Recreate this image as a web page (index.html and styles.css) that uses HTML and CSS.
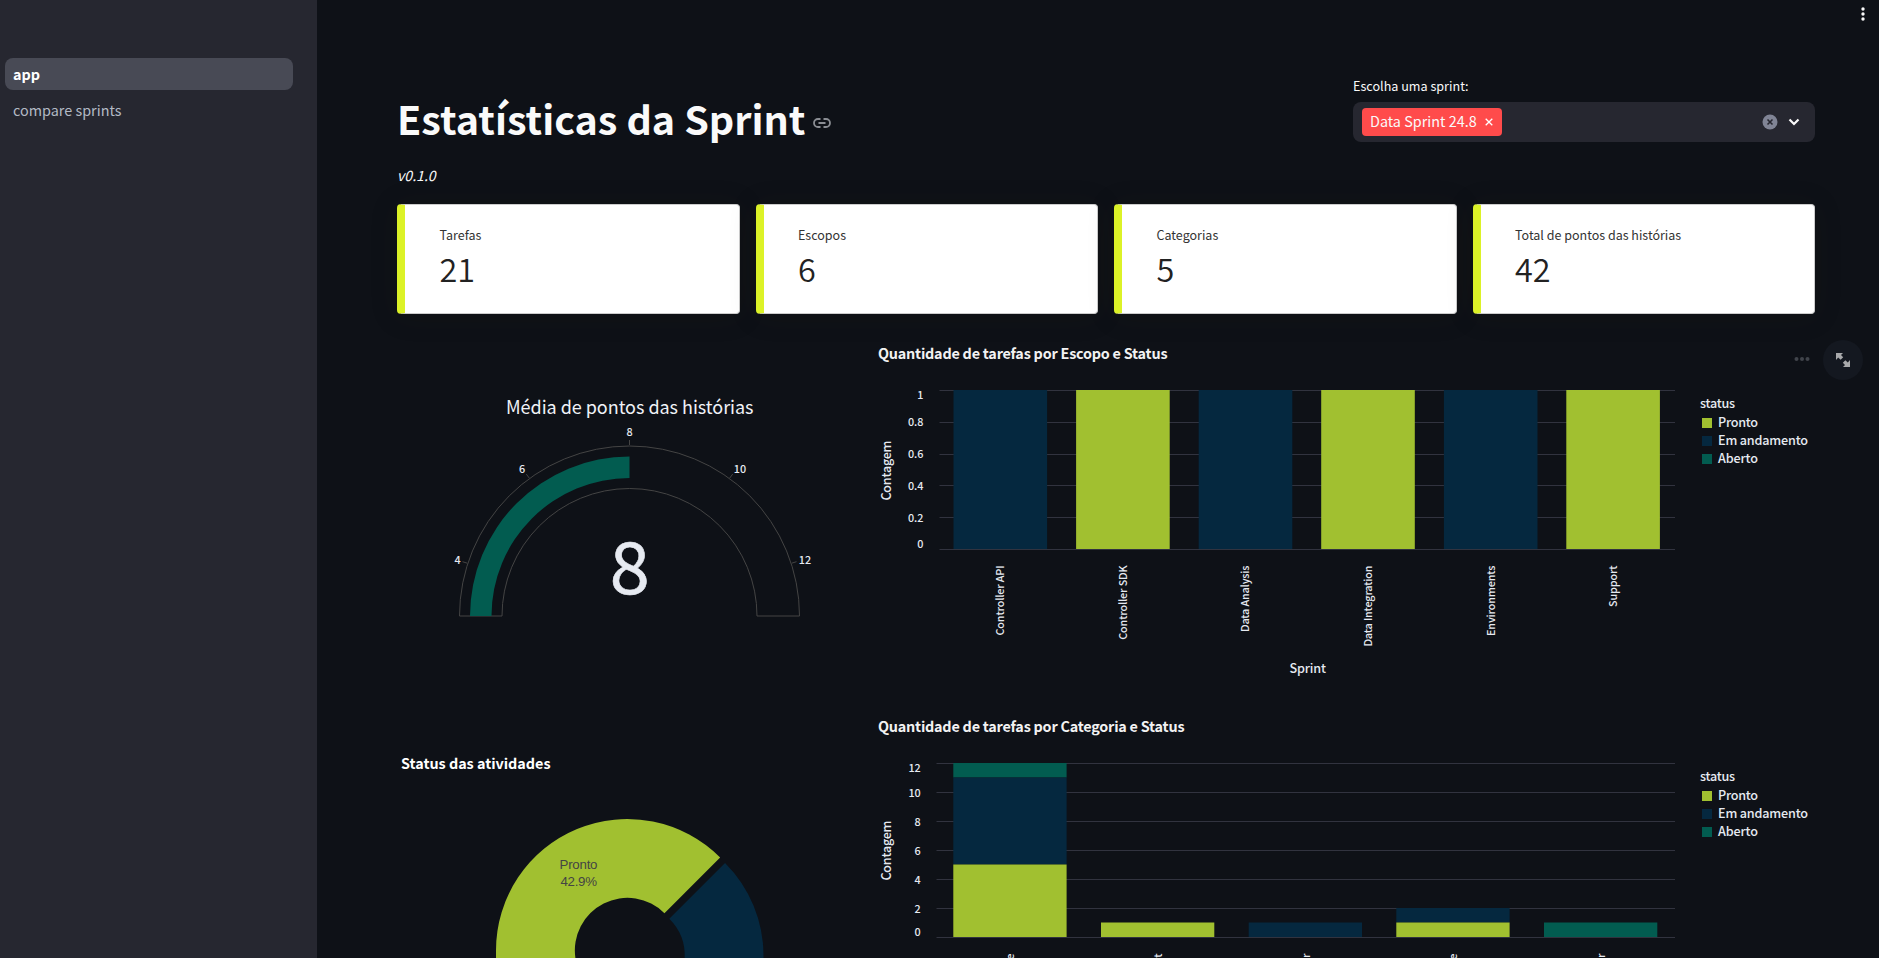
FILE: index.html
```html
<!DOCTYPE html>
<html lang="pt-BR">
<head>
<meta charset="utf-8">
<title>Estatísticas da Sprint</title>
<link rel="stylesheet" href="styles.css">
</head>
<body>
<div class="app">
  <aside class="sidebar">
    <nav class="nav">
      <a class="nav-item active">app</a>
      <a class="nav-item">compare sprints</a>
    </nav>
  </aside>
  <main class="main">
    <svg class="kebab" width="4" height="14" viewBox="0 0 4 14"><circle cx="2" cy="2" r="1.7"/><circle cx="2" cy="7" r="1.7"/><circle cx="2" cy="12" r="1.7"/></svg>
    <header class="header">
      <h1 class="title"><span>Estatísticas da Sprint</span>
        <svg class="link" width="18" height="10" viewBox="0 0 18 10"><path d="M7.5 1H5a4 4 0 0 0 0 8h2.500M10.500 1H13a4 4 0 0 1 0 8h-2.500M5.500 5h7"/></svg>
      </h1>
      <div class="field">
        <label class="field-label">Escolha uma sprint:</label>
        <div class="select">
          <span class="tag"><span class="tag-text">Data Sprint 24.8</span><svg width="8" height="8" viewBox="0 0 8 8"><path d="M.7.7l6.600 6.600M7.300.7L.7 7.300"/></svg></span>
          <svg class="clear" width="16" height="16" viewBox="0 0 16 16"><circle cx="8" cy="8" r="7.500"/><path d="M5.500 5.500l5 5M10.500 5.500l-5 5"/></svg>
          <svg class="chevron" width="12" height="8" viewBox="0 0 12 8"><path d="M1.500 1.500L6 6l4.500-4.500"/></svg>
        </div>
      </div>
    </header>
    <p class="version">v0.1.0</p>
    <section class="cards">
      <div class="card"><span class="card-label">Tarefas</span><span class="card-value">21</span></div>
      <div class="card"><span class="card-label">Escopos</span><span class="card-value">6</span></div>
      <div class="card"><span class="card-label">Categorias</span><span class="card-value">5</span></div>
      <div class="card"><span class="card-label">Total de pontos das histórias</span><span class="card-value">42</span></div>
    </section>
    <section class="charts">
      <svg class="chart" width="465" height="373" viewBox="397 330 465 373">
        <text class="gauge-title" x="506" y="414" textLength="247.500">Média de pontos das histórias</text>
        <path class="gauge-line" d="M459.500 616A170 170 0 0 1 799.500 616H757A127.500 127.500 0 0 0 502 616Z"/>
        <path class="teal" d="M470 616A159.500 159.500 0 0 1 629.500 456.500V478A138 138 0 0 0 491.500 616Z"/>
        <g class="gauge-line"><path d="M629.500 445v-5M467.300 563.200l-4.800-1.500M529.300 478.100l-3-4M729.700 478.100l3-4M791.700 563.200l4.800-1.500"/></g>
        <g class="gauge-tick"><text x="457.500" y="564">4</text><text x="522" y="473">6</text><text x="629.500" y="436">8</text><text x="740" y="473">10</text><text x="805" y="564">12</text></g>
        <text class="gauge-value" x="629.700" y="594">8</text>
      </svg>
      <div class="chart-box">
        <svg class="chart" width="938" height="373" viewBox="877 330 938 373">
          <text class="chart-title" x="878" y="359" textLength="289.500">Quantidade de tarefas por Escopo e Status</text>
          <path class="grid" d="M939.500 390.500H1675M939.500 422.500H1675M939.500 454.500H1675M939.500 485.500H1675M939.500 517.500H1675M939.500 549.500H1675"/>
          <g class="navy"><rect x="953.500" y="390" width="93.600" height="159"/><rect x="1198.700" y="390" width="93.600" height="159"/><rect x="1443.900" y="390" width="93.600" height="159"/></g>
          <g class="green"><rect x="1076.100" y="390" width="93.600" height="159"/><rect x="1321.200" y="390" width="93.600" height="159"/><rect x="1566.300" y="390" width="93.600" height="159"/></g>
          <g class="tick end"><text x="923.500" y="399">1</text><text x="923.500" y="426">0.8</text><text x="923.500" y="458">0.6</text><text x="923.500" y="490">0.4</text><text x="923.500" y="522">0.2</text><text x="923.500" y="548">0</text></g>
          <text class="axis-title" transform="translate(890.500 500.500) rotate(-90)" textLength="60">Contagem</text>
          <g class="tick">
            <text transform="translate(1004 635.500) rotate(-90)" textLength="70">Controller API</text>
            <text transform="translate(1127 639.800) rotate(-90)" textLength="74.500">Controller SDK</text>
            <text transform="translate(1249 632) rotate(-90)" textLength="66.500">Data Analysis</text>
            <text transform="translate(1372 646.500) rotate(-90)" textLength="81">Data Integration</text>
            <text transform="translate(1495 636) rotate(-90)" textLength="70.500">Environments</text>
            <text transform="translate(1617 607) rotate(-90)" textLength="41.500">Support</text>
          </g>
          <text class="axis-title" x="1289.500" y="673" textLength="36.500">Sprint</text>
          <g class="legend"><text x="1700" y="408" textLength="35">status</text><text x="1718" y="427" textLength="40">Pronto</text><text x="1718" y="445" textLength="90">Em andamento</text><text x="1718" y="463" textLength="40">Aberto</text></g>
          <rect class="green" x="1702" y="418" width="10" height="10"/><rect class="navy" x="1702" y="436" width="10" height="10"/><rect class="teal" x="1702" y="454" width="10" height="10"/>
          <g class="dots"><circle cx="1796.500" cy="359" r="2"/><circle cx="1802" cy="359" r="2"/><circle cx="1807.500" cy="359" r="2"/></g>
        </svg>
        <span class="expand"><svg width="14" height="14" viewBox="0 0 14 14"><path d="M0 0h7L5 2l2.200 2.200-2.600 2.600L2.200 4.600 0 7zM14 14H7l2-2-2.200-2.200 2.600-2.600 2.400 2.200L14 7z"/></svg></span>
      </div>
      <svg class="chart" width="465" height="255" viewBox="397 703 465 255">
        <text class="pie-title" x="401" y="769" textLength="149.500">Status das atividades</text>
        <path class="green" d="M720.140 857.460A131.300 131.300 0 0 0 496 950.300V958H575.400A52.500 52.500 0 0 1 664.420 913.180Z"/>
        <path class="navy" d="M725.040 862.960A131.300 131.300 0 0 1 763.500 955.800V958H684.700A52.500 52.500 0 0 0 669.320 918.680Z"/>
        <g class="pie-label"><text x="559.500" y="869" textLength="38">Pronto</text><text x="560.500" y="886" textLength="36.500">42.9%</text></g>
      </svg>
      <svg class="chart" width="938" height="255" viewBox="877 703 938 255">
        <text class="chart-title" x="878" y="732" textLength="306.500">Quantidade de tarefas por Categoria e Status</text>
        <path class="grid" d="M936.500 763.500H1675M936.500 792.500H1675M936.500 821.500H1675M936.500 850.500H1675M936.500 879.500H1675M936.500 908.500H1675M936.500 937.500H1675"/>
        <g class="teal"><rect x="953.300" y="763" width="113.300" height="14.500"/><rect x="1544" y="922.500" width="113.300" height="14.500"/></g>
        <g class="navy"><rect x="953.300" y="777.500" width="113.300" height="87"/><rect x="1248.700" y="922.500" width="113.300" height="14.500"/><rect x="1396.300" y="908" width="113.300" height="14.500"/></g>
        <g class="green"><rect x="953.300" y="864.500" width="113.300" height="72.500"/><rect x="1101" y="922.500" width="113.300" height="14.500"/><rect x="1396.300" y="922.500" width="113.300" height="14.500"/></g>
        <g class="tick end"><text x="920.700" y="772">12</text><text x="920.700" y="797">10</text><text x="920.700" y="826">8</text><text x="920.700" y="855">6</text><text x="920.700" y="884">4</text><text x="920.700" y="913">2</text><text x="920.700" y="936">0</text></g>
        <text class="axis-title" transform="translate(890.500 880.500) rotate(-90)" textLength="60">Contagem</text>
        <g class="tick end">
          <text transform="translate(1014 953.500) rotate(-90)">e</text>
          <text transform="translate(1162 953.500) rotate(-90)">t</text>
          <text transform="translate(1309.500 953.500) rotate(-90)">r</text>
          <text transform="translate(1457 953.500) rotate(-90)">e</text>
          <text transform="translate(1605 953.500) rotate(-90)">r</text>
        </g>
        <g class="legend"><text x="1700" y="781" textLength="35">status</text><text x="1718" y="800" textLength="40">Pronto</text><text x="1718" y="818" textLength="90">Em andamento</text><text x="1718" y="836" textLength="40">Aberto</text></g>
        <rect class="green" x="1702" y="791" width="10" height="10"/><rect class="navy" x="1702" y="809" width="10" height="10"/><rect class="teal" x="1702" y="827" width="10" height="10"/>
      </svg>
    </section>
  </main>
</div>
</body>
</html>
```
FILE: styles.css
```css
* { box-sizing: border-box; }
body {
  margin: 0;
  background: #0e1117;
  color: #fafafa;
  font-family: "Noto Sans CJK SC", "Noto Sans", sans-serif;
}
.app { display: flex; height: 100vh; overflow: hidden; }
.sidebar { width: 317px; flex: none; background: #262730; padding: 58px 24px 0 5px; }
.nav { display: flex; flex-direction: column; gap: 4px; }
.nav-item { height: 32px; padding: 0 8px; line-height: 32px; font-size: 14.4px; color: #b3bac5; border-radius: 8px; }
.nav-item.active { background: #484a55; color: #fff; font-weight: 700; }
.main { position: relative; flex: 1; padding: 78px 64px 0 80px; }
.kebab { position: absolute; top: 7px; right: 14px; fill: #fafafa; }
.header { display: flex; justify-content: space-between; height: 64px; }
.title { display: flex; align-items: center; gap: 8px; margin: 10px 0 0; height: 60px; font-size: 39.500px; line-height: 60px; font-weight: 700; white-space: nowrap; }
.link { fill: none; stroke: #8a8d93; stroke-width: 1.800; margin-top: 9px; }
.field { width: 462px; }
.field-label { display: block; height: 24px; line-height: 16px; font-size: 12.600px; }
.select { display: flex; align-items: center; height: 40px; background: #262730; border-radius: 8px; padding: 0 15px 0 9px; }
.tag { display: flex; align-items: center; gap: 8px; height: 28px; width: 140px; padding: 0 8px; background: #ff4b4b; border-radius: 4px; font-size: 14.400px; white-space: nowrap; }
.tag-text { height: 28px; line-height: 26px; }
.tag svg { stroke: #fff; stroke-width: 1.300; fill: none; flex: none; }
.clear { margin-left: auto; fill: #808495; stroke: none; }
.clear path { stroke: #262730; stroke-width: 1.600; }
.chevron { margin-left: 10px; fill: none; stroke: #fafafa; stroke-width: 2.200; }
.version { margin: 21px 0 0; height: 41px; line-height: 24px; font-size: 14.100px; font-style: italic; }
.cards { display: grid; grid-template-columns: repeat(4, 1fr); gap: 16px; }
.card { height: 110px; display: flex; flex-direction: column; background: #fff; color: #262730; border: 1px solid #ccc; border-left: 8px solid #dcf227; border-radius: 4px; padding: 19px 0 0 34.500px; box-shadow: 0 2px 28px rgba(40, 36, 16, .15); }
.card-label { height: 21px; line-height: 21px; font-size: 12.500px; color: #333; }
.card-value { height: 50px; line-height: 46px; font-size: 32.400px; color: #222; font-weight: 350; }
.charts { display: grid; grid-template-columns: 465px 938px; column-gap: 15px; margin-top: 16px; }
.chart { display: block; }
.chart-box { position: relative; }
.expand { position: absolute; left: 946px; top: 10px; width: 40px; height: 40px; border-radius: 50%; background: #141820; display: flex; align-items: center; justify-content: center; }
.expand svg { fill: #a8a9ab; }
.green { fill: #a1c030; }
.navy { fill: #05283f; }
.teal { fill: #025c50; }
.grid { stroke: #31333f; fill: none; }
.gauge-line { stroke: #444; fill: none; }
.gauge-title { font-size: 18px; fill: #f0f2f8; }
.gauge-tick { font-size: 10.800px; font-weight: 500; fill: #e6eaf1; text-anchor: middle; }
.gauge-value { font-size: 72px; fill: #e6eaf1; stroke: #e6eaf1; stroke-width: .600; text-anchor: middle; }
.chart-title { font-size: 14.400px; font-weight: 700; fill: #f2f2f2; }
.pie-title { font-size: 14.400px; font-weight: 700; fill: #fff; }
.tick { font-size: 10.800px; font-weight: 500; fill: #e6eaf1; }
.end { text-anchor: end; }
.axis-title, .legend { font-size: 12.600px; font-weight: 500; fill: #e6eaf1; }
.pie-label { font-family: "Liberation Sans", Arial, sans-serif; font-size: 13.300px; fill: #444; }
.dots { fill: #40444b; }
```
